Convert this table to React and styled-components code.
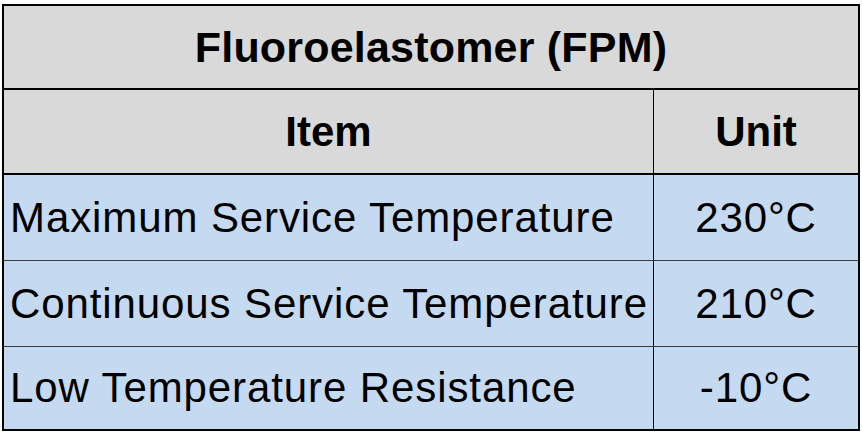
import React from 'react';
import styled, { createGlobalStyle } from 'styled-components';

const GlobalStyle = createGlobalStyle`
  body {
    margin: 0;
    background: #ffffff;
    font-family: "Liberation Sans", Arial, sans-serif;
  }
`;

const rows = [
  { item: 'Maximum Service Temperature', unit: '230°C', height: 85 },
  { item: 'Continuous Service Temperature', unit: '210°C', height: 85 },
  { item: 'Low Temperature Resistance', unit: '-10°C', height: 82 },
];

const Sheet = styled.div`
  margin: 4px 0 0 2px;
  width: 858px;
  box-sizing: border-box;
  border: 2px solid #000;
  color: #000;
`;

const Title = styled.div`
  height: 82px;
  border-bottom: 2px solid #000;
  background: #d9d9d9;
  display: flex;
  align-items: center;
  justify-content: center;
  font-weight: bold;
  font-size: 43px;
  letter-spacing: 0.2px;
`;

const Row = styled.div`
  display: grid;
  grid-template-columns: 650px 1fr;
  height: ${({ h }) => h}px;
  background: ${({ head }) => (head ? '#d9d9d9' : '#c5d9f1')};
  border-bottom: ${({ line }) => line || 'none'};
`;

const Cell = styled.div`
  display: flex;
  align-items: center;
  justify-content: ${({ left }) => (left ? 'flex-start' : 'center')};
  padding-left: ${({ left }) => (left ? '6px' : '0')};
  border-right: ${({ divider }) => (divider ? '1px solid #000' : 'none')};
  font-size: 42px;
  font-weight: ${({ head }) => (head ? 'bold' : 'normal')};
  letter-spacing: ${({ head }) => (head ? '0' : '0.9px')};
  white-space: nowrap;
`;

export default function App() {
  return (
    <>
      <GlobalStyle />
      <Sheet>
        <Title>Fluoroelastomer (FPM)</Title>
        <Row head h={83} line="2px solid #000">
          <Cell head divider>Item</Cell>
          <Cell head>Unit</Cell>
        </Row>
        {rows.map((r, i) => (
          <Row key={r.item} h={r.height} line={i < rows.length - 1 ? '1px solid #3a3a3a' : null}>
            <Cell left divider>{r.item}</Cell>
            <Cell>{r.unit}</Cell>
          </Row>
        ))}
      </Sheet>
    </>
  );
}
